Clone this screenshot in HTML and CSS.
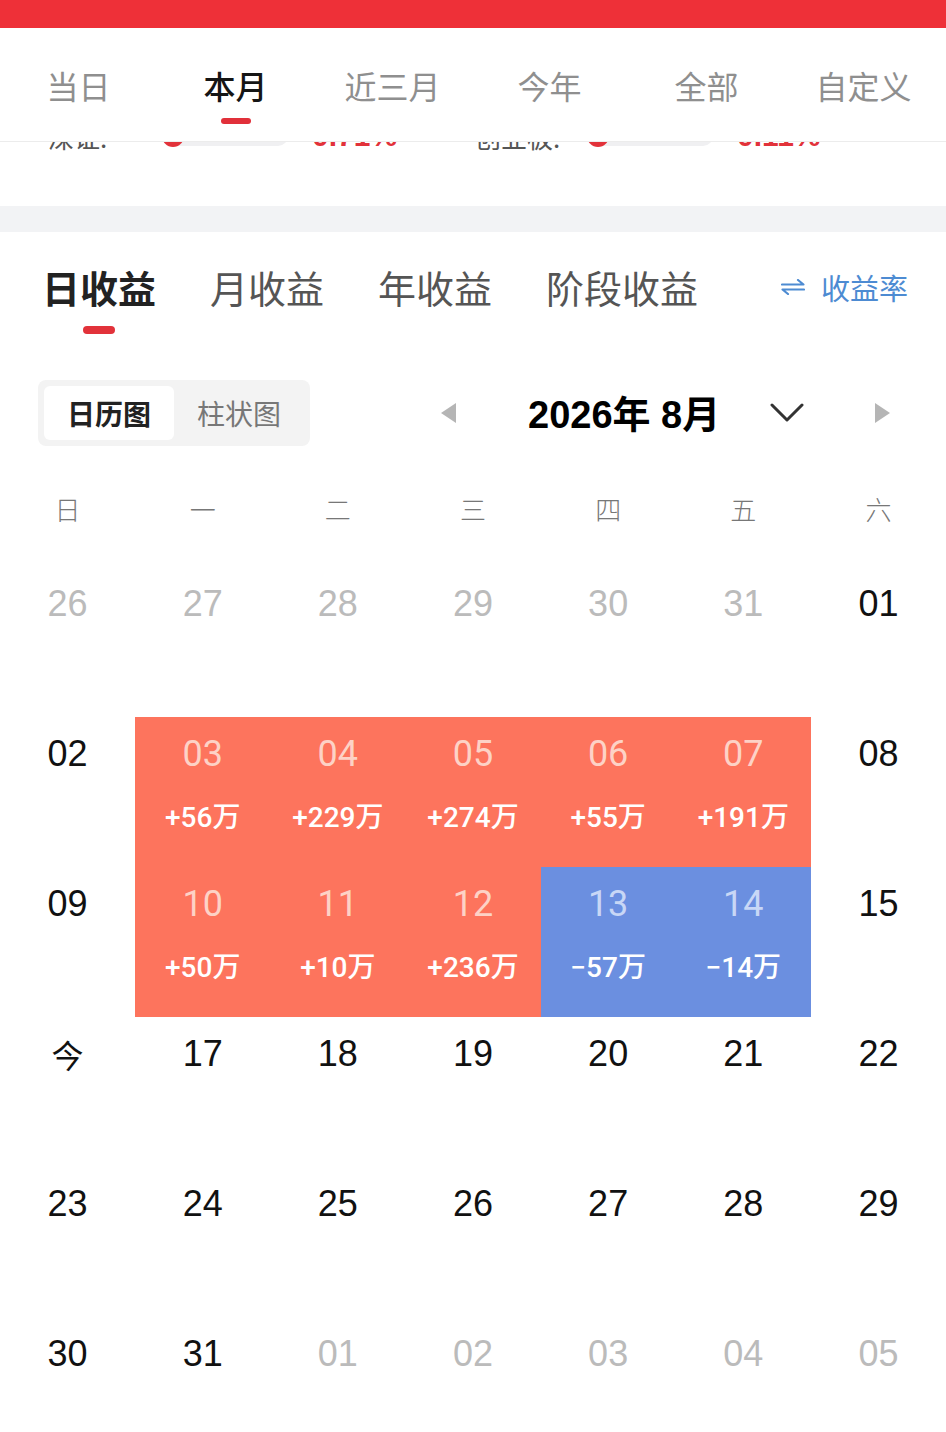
FILE: index.html
```html
<!DOCTYPE html>
<html lang="zh-CN">
<head>
<meta charset="utf-8">
<title>收益日历</title>
<link rel="stylesheet" href="styles.css">
</head>
<body>
<div class="statusbar"></div>

<div class="period-tabs">
  <div class="period-tab">当日</div>
  <div class="period-tab active">本月<span class="pt-line"></span></div>
  <div class="period-tab">近三月</div>
  <div class="period-tab">今年</div>
  <div class="period-tab">全部</div>
  <div class="period-tab">自定义</div>
</div>

<div class="peek">
  <div class="peek-row">
    <span class="peek-label">深证:</span>
    <span class="peek-bar"><span class="peek-dot"></span></span>
    <span class="peek-val">0.71%</span>
    <span class="peek-label second">创业板:</span>
    <span class="peek-bar"><span class="peek-dot"></span></span>
    <span class="peek-val">0.11%</span>
  </div>
</div>
<div class="spacer"></div>
<div class="band"></div>

<div class="section">
  <div class="income-tabs">
    <div class="itab active">日收益<span class="it-line"></span></div>
    <div class="itab">月收益</div>
    <div class="itab">年收益</div>
    <div class="itab">阶段收益</div>
    <div class="rate">
      <svg class="swap" width="24" height="16" viewBox="0 0 24 16"><path d="M1 5.5H22.5L17 1M23 10.5H1.5L7 15" fill="none" stroke="#4d8bd2" stroke-width="2.2" stroke-linecap="round" stroke-linejoin="round"/></svg>
      <span>收益率</span>
    </div>
  </div>

  <div class="toolbar">
    <div class="toggle">
      <div class="seg active">日历图</div>
      <div class="seg">柱状图</div>
    </div>
    <div class="month-nav">
      <svg class="tri-left" width="15" height="20" viewBox="0 0 15 20"><polygon points="15,0 15,20 0,10" fill="#b5b5b5"/></svg>
      <div class="month-title">2026年 8月</div>
      <svg class="chev" width="34" height="20" viewBox="0 0 34 20"><polyline points="2,2 17,17 32,2" fill="none" stroke="#333" stroke-width="3" stroke-linecap="round" stroke-linejoin="round"/></svg>
      <svg class="tri-right" width="15" height="20" viewBox="0 0 15 20"><polygon points="0,0 0,20 15,10" fill="#b5b5b5"/></svg>
    </div>
  </div>

  <div class="weekdays">
    <div>日</div><div>一</div><div>二</div><div>三</div><div>四</div><div>五</div><div>六</div>
  </div>

  <div class="cal">
    <div class="cell other"><div class="date">26</div></div>
    <div class="cell other"><div class="date">27</div></div>
    <div class="cell other"><div class="date">28</div></div>
    <div class="cell other"><div class="date">29</div></div>
    <div class="cell other"><div class="date">30</div></div>
    <div class="cell other"><div class="date">31</div></div>
    <div class="cell"><div class="date">01</div></div>

    <div class="cell"><div class="date">02</div></div>
    <div class="cell up"><div class="date">03</div><div class="amt">+56万</div></div>
    <div class="cell up"><div class="date">04</div><div class="amt">+229万</div></div>
    <div class="cell up"><div class="date">05</div><div class="amt">+274万</div></div>
    <div class="cell up"><div class="date">06</div><div class="amt">+55万</div></div>
    <div class="cell up"><div class="date">07</div><div class="amt">+191万</div></div>
    <div class="cell"><div class="date">08</div></div>

    <div class="cell"><div class="date">09</div></div>
    <div class="cell up"><div class="date">10</div><div class="amt">+50万</div></div>
    <div class="cell up"><div class="date">11</div><div class="amt">+10万</div></div>
    <div class="cell up"><div class="date">12</div><div class="amt">+236万</div></div>
    <div class="cell down"><div class="date">13</div><div class="amt">−57万</div></div>
    <div class="cell down"><div class="date">14</div><div class="amt">−14万</div></div>
    <div class="cell"><div class="date">15</div></div>

    <div class="cell"><div class="date today">今</div></div>
    <div class="cell"><div class="date">17</div></div>
    <div class="cell"><div class="date">18</div></div>
    <div class="cell"><div class="date">19</div></div>
    <div class="cell"><div class="date">20</div></div>
    <div class="cell"><div class="date">21</div></div>
    <div class="cell"><div class="date">22</div></div>

    <div class="cell"><div class="date">23</div></div>
    <div class="cell"><div class="date">24</div></div>
    <div class="cell"><div class="date">25</div></div>
    <div class="cell"><div class="date">26</div></div>
    <div class="cell"><div class="date">27</div></div>
    <div class="cell"><div class="date">28</div></div>
    <div class="cell"><div class="date">29</div></div>

    <div class="cell"><div class="date">30</div></div>
    <div class="cell"><div class="date">31</div></div>
    <div class="cell other"><div class="date">01</div></div>
    <div class="cell other"><div class="date">02</div></div>
    <div class="cell other"><div class="date">03</div></div>
    <div class="cell other"><div class="date">04</div></div>
    <div class="cell other"><div class="date">05</div></div>
  </div>
</div>
</body>
</html>
```

FILE: styles.css
```css
* { box-sizing: border-box; }
html, body { margin: 0; padding: 0; }
body {
  width: 946px;
  height: 1432px;
  overflow: hidden;
  background: #fff;
  font-family: "Noto Sans CJK SC", sans-serif;
  color: #111;
}

.statusbar { height: 28px; background: #ee3038; }

.period-tabs {
  height: 114px;
  display: flex;
  padding-right: 4px;
  border-bottom: 1px solid #ececec;
  background: #fff;
}
.period-tab {
  flex: 1;
  display: flex;
  flex-direction: column;
  align-items: center;
  padding-top: 35px;
  font-size: 32px;
  line-height: 44px;
  color: #8f8f8f;
}
.period-tab.active { color: #151515; font-weight: 500; }
.pt-line {
  display: block;
  width: 30px;
  height: 6px;
  margin-top: 11px;
  border-radius: 3px;
  background: #e1303a;
}

.peek { height: 10px; overflow: hidden; }
.peek-row {
  display: flex;
  align-items: center;
  height: 40px;
  margin-top: -26px;
  padding-left: 48px;
}
.peek-label { font-size: 26px; color: #555; width: 114px; }
.peek-label.second { margin-left: 78px; width: 112px; }
.peek-bar {
  position: relative;
  width: 126px;
  height: 20px;
  border-radius: 10px;
  background: #f0f0f2;
}
.peek-dot {
  position: absolute;
  left: 0;
  top: -1px;
  width: 22px;
  height: 22px;
  border-radius: 50%;
  background: #e2323a;
}
.peek-val {
  margin-left: 24px;
  font-family: "Liberation Sans", sans-serif;
  font-weight: 700;
  font-size: 30px;
  color: #e2323a;
}

.spacer { height: 54px; }
.band { height: 26px; background: #f2f3f5; }

.section { padding-top: 27px; }

.income-tabs {
  display: flex;
  align-items: flex-start;
  padding: 0 38px 0 42px;
  gap: 54px;
}
.itab {
  display: flex;
  flex-direction: column;
  align-items: center;
  font-size: 38px;
  line-height: 56px;
  color: #555;
}
.itab.active { color: #222; font-weight: 700; }
.it-line {
  display: block;
  width: 32px;
  height: 8px;
  margin-top: 11px;
  border-radius: 4px;
  background: #e2323a;
}
.rate {
  margin-left: auto;
  display: flex;
  align-items: center;
  gap: 16px;
  height: 56px;
  font-size: 29px;
  color: #4d8bd2;
}

.toolbar {
  display: flex;
  align-items: center;
  height: 66px;
  margin-top: 46px;
  padding-left: 38px;
}
.toggle {
  display: flex;
  padding: 6px;
  border-radius: 8px;
  background: #f3f3f3;
}
.seg {
  width: 130px;
  height: 54px;
  display: flex;
  align-items: center;
  justify-content: center;
  font-size: 28px;
  color: #777;
  border-radius: 6px;
}
.seg.active { background: #fff; color: #222; font-weight: 700; }

.month-nav { display: flex; align-items: center; }
.tri-left { margin-left: 131px; }
.month-title {
  margin-left: 72px;
  margin-top: 3px;
  font-family: "Liberation Sans", "Noto Sans CJK SC", sans-serif;
  font-weight: 700;
  font-size: 38px;
  line-height: 50px;
  color: #000;
  white-space: nowrap;
}
.chev { margin-left: 50px; }
.tri-right { margin-left: 71px; }

.weekdays {
  display: grid;
  grid-template-columns: repeat(7, 1fr);
  padding: 40px 0 35px;
  line-height: 46px;
  font-size: 26px;
  font-weight: 300;
  color: #777;
  text-align: center;
}

.cal {
  display: grid;
  grid-template-columns: repeat(7, 1fr);
  grid-auto-rows: 150px;
}
.cell { text-align: center; padding-top: 15px; }
.date {
  font-family: "Liberation Sans", sans-serif;
  font-size: 36px;
  line-height: 44px;
  color: #111;
}
.date.today { font-family: "Noto Sans CJK SC", sans-serif; font-size: 32px; }
.cell.other .date { color: #bbb; }
.cell.up { background: #fd745d; }
.cell.down { background: #6b8fe0; }
.cell.up .date, .cell.down .date { font-family: Roboto, sans-serif; }
.cell.up .date { color: #fdd2c6; }
.cell.down .date { color: #c8d7f6; }
.amt {
  margin-top: 25px;
  font-family: Roboto, "Noto Sans CJK SC", sans-serif;
  font-weight: 500;
  font-size: 28px;
  line-height: 34px;
  color: #fff;
}
```
